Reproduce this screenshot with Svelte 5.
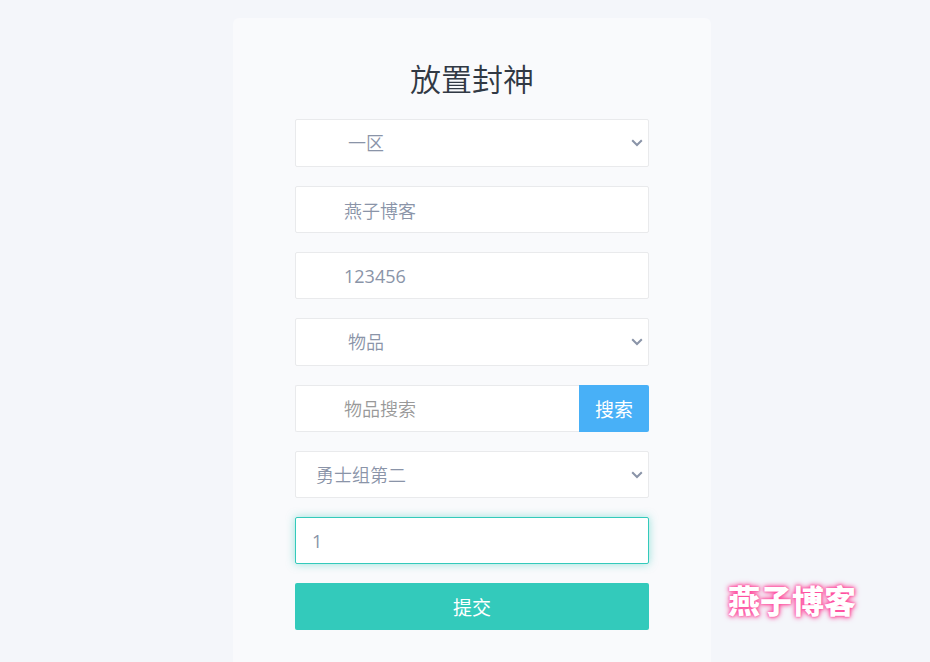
<script lang="ts">
    let area = $state('1');
    let account = $state('燕子博客');
    let password = $state('123456');
    let kind = $state('item');
    let keyword = $state('');
    let item = $state('1');
    let amount = $state('1');

    const items = [
        { id: '1', name: '勇士组第二' },
    ];

    let results = $derived(items.filter((i) => i.name.includes(keyword)));

    function submit(e: SubmitEvent) {
        e.preventDefault();
    }
</script>

{#snippet arrow()}
    <svg class="arrow" viewBox="0 0 12 8" width="12" height="8" aria-hidden="true">
        <path d="M1.2 1.2 L6 6 L10.8 1.2" fill="none" stroke="currentColor" stroke-width="2" />
    </svg>
{/snippet}

<div class="page">
    <main class="card">
        <h1>放置封神</h1>
        <form onsubmit={submit}>
            <div class="select">
                <select class="field indent" aria-label="区服" bind:value={area}>
                    <option value="1">一区</option>
                </select>
                {@render arrow()}
            </div>
            <input class="field indent" type="text" aria-label="账号" bind:value={account} />
            <input class="field indent digits" type="text" aria-label="密码" bind:value={password} />
            <div class="select">
                <select class="field indent" aria-label="类型" bind:value={kind}>
                    <option value="item">物品</option>
                </select>
                {@render arrow()}
            </div>
            <div class="group">
                <input class="field indent" type="text" aria-label="物品搜索" placeholder="物品搜索" bind:value={keyword} />
                <button class="btn search" type="button">搜索</button>
            </div>
            <div class="select">
                <select class="field" aria-label="物品" bind:value={item}>
                    {#each results as r}
                        <option value={r.id}>{r.name}</option>
                    {/each}
                </select>
                {@render arrow()}
            </div>
            <input class="field digits active" type="text" aria-label="数量" bind:value={amount} />
            <button class="btn submit" type="submit">提交</button>
        </form>
    </main>
    <span class="mark">燕子博客</span>
</div>

<style>
    :global(body) {
        background: #f4f6fa;
        overflow-x: hidden;
    }
    .page {
        position: relative;
        min-height: 100vh;
        box-sizing: border-box;
        padding: 18px 0 0 14px;
        font-family: "Open Sans", "Noto Sans CJK SC", sans-serif;
    }
    .card {
        box-sizing: border-box;
        max-width: 478px;
        margin: 0 auto;
        padding: 38px 62px 32px;
        background: #f9fafc;
        border-radius: 6px 6px 0 0;
    }
    h1 {
        margin: 0 0 19px;
        font-family: "Noto Sans CJK SC", sans-serif;
        font-size: 31px;
        font-weight: 350;
        line-height: 44px;
        text-align: center;
        color: #313944;
    }
    form {
        display: flex;
        flex-direction: column;
        gap: 19px;
    }
    .field {
        box-sizing: border-box;
        display: block;
        width: 100%;
        min-width: 0;
        height: 47px;
        margin: 0;
        padding: 0 16px;
        border: 1px solid #e9eaec;
        border-radius: 2px;
        outline: none;
        background: #fff;
        color: #8a94a8;
        font-family: inherit;
        font-size: 18px;
        font-weight: 350;
    }
    .indent {
        padding-left: 48px;
    }
    .digits {
        font-weight: 400;
    }
    .select {
        position: relative;
    }
    select.field {
        appearance: none;
        padding-left: 20px;
        padding-right: 24px;
    }
    select.indent {
        height: 48px;
        padding-left: 52px;
    }
    .arrow {
        position: absolute;
        top: 50%;
        right: 6px;
        margin-top: -4px;
        color: #8a94a8;
        pointer-events: none;
    }
    .field::placeholder {
        color: #999;
        opacity: 1;
    }
    .active {
        border-color: #33cabb;
        box-shadow: 0 0 8px rgba(51, 202, 187, 0.5);
    }
    .group {
        display: flex;
    }
    .group .field {
        flex: 1;
        border-right: none;
        border-radius: 2px 0 0 2px;
    }
    .btn {
        height: 47px;
        padding: 0 15px;
        border: none;
        border-radius: 2px;
        color: #fff;
        font-family: inherit;
        font-size: 19px;
        font-weight: 400;
        cursor: pointer;
    }
    .search {
        flex: none;
        width: 70px;
        border-radius: 0 2px 2px 0;
        background: #48b0f7;
    }
    .submit {
        background: #33cabb;
    }
    .mark {
        position: absolute;
        right: 74px;
        bottom: 38px;
        color: #fff;
        font-size: 32px;
        font-weight: 900;
        line-height: 46px;
        text-shadow: 0 0 2px #ff4a9c, 0 0 4px #ff4a9c, 0 0 6px #ff4a9c;
    }
</style>
